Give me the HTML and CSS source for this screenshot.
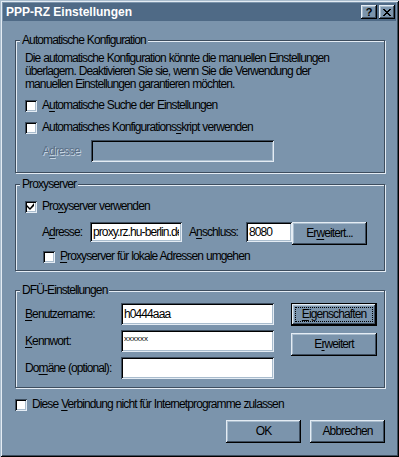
FILE: index.html
```html
<!DOCTYPE html>
<html lang="de">
<head>
  <meta charset="UTF-8">
  <title>PPP-RZ Einstellungen</title>
  <link rel="stylesheet" href="styles.css">
</head>
<body>
  <div class="window">
    <div class="titlebar">
      <span class="title">PPP-RZ Einstellungen</span>
      <div class="caption-buttons">
        <span class="cap-btn help">?</span>
        <span class="cap-btn close">
          <svg width="8" height="7" viewBox="0 0 8 7"><path d="M0 0h2v1h-2z M6 0h2v1h-2z M1 1h2v1h-2z M5 1h2v1h-2z M2 2h4v1h-4z M3 3h2v1h-2z M2 4h4v1h-4z M1 5h2v1h-2z M5 5h2v1h-2z M0 6h2v1h-2z M6 6h2v1h-2z" fill="#000"/></svg>
        </span>
      </div>
    </div>

    <div class="dialog">
      <div class="group group-auto">
        <div class="legend">Automatische Konfiguration</div>
        <p class="note">Die automatische Konfiguration könnte die manuellen Einstellungen<br>überlagern. Deaktivieren Sie sie, wenn Sie die Verwendung der<br>manuellen Einstellungen garantieren möchten.</p>
        <label class="check auto-search"><span class="box"></span><span>A<u>u</u>tomatische Suche der Einstellungen</span></label>
        <label class="check auto-script"><span class="box"></span><span>Automatisches Konfigurations<u>s</u>kript verwenden</span></label>
        <div class="field-row script-row">
          <span class="disabled-label">A<u>d</u>resse</span>
          <input class="textbox disabled" type="text" disabled>
        </div>
      </div>

      <div class="group group-proxy">
        <div class="legend">Proxyserver</div>
        <label class="check use-proxy"><span class="box"><svg width="8" height="8" viewBox="0 0 8 8"><path d="M7 0v3l-4 4-3-3v-2l3 3z" fill="#000"/></svg></span><span>Pro<u>x</u>yserver verwenden</span></label>
        <div class="proxy-row">
          <span class="lbl lbl-addr">A<u>d</u>resse:</span>
          <input class="textbox addr" type="text" value="proxy.rz.hu-berlin.de">
          <span class="lbl lbl-port">A<u>n</u>schluss:</span>
          <input class="textbox port" type="text" value="8080">
          <button class="btn btn-adv">Er<u>w</u>eitert...</button>
        </div>
        <label class="check bypass"><span class="box"></span><span><u>P</u>roxyserver für lokale Adressen umgehen</span></label>
      </div>

      <div class="group group-dfu">
        <div class="legend">DFÜ-Einstellungen</div>
        <div class="dfu-body">
          <div class="dfu-fields">
            <span class="lbl"><u>B</u>enutzername:</span>
            <input class="textbox" type="text" value="h0444aaa">
            <span class="lbl"><u>K</u>ennwort:</span>
            <input class="textbox pass" type="text" value="xxxxxx">
            <span class="lbl">Do<u>m</u>äne (optional):</span>
            <input class="textbox" type="text">
          </div>
          <div class="dfu-buttons">
            <button class="btn default"><span class="focus"><u>E</u>igenschaften</span></button>
            <button class="btn">E<u>r</u>weitert</button>
          </div>
        </div>
      </div>

      <label class="check no-inet"><span class="box"></span><span>Diese <u>V</u>erbindung nicht für Internetprogramme zulassen</span></label>

      <div class="actions">
        <button class="btn">OK</button>
        <button class="btn">Abbrechen</button>
      </div>
    </div>
  </div>
</body>
</html>
```

FILE: styles.css
```css
body { margin: 0; font-family: "Liberation Sans", Arial, sans-serif; font-size: 12px; letter-spacing: -0.9px; word-spacing: 0.5px; line-height: 13px; color: #000; }
u { text-decoration-thickness: 1px; text-underline-offset: 2px; }

.window { width: 399px; height: 457px; box-sizing: border-box; padding: 3px; background: #7b94ac; display: flex; flex-direction: column;
  box-shadow: inset 1px 1px #a9bccd, inset -1px -1px #000, inset 2px 2px #e4ecf4, inset -2px -2px #3d4d5e; }

.titlebar { height: 18px; flex: none; background: #4f6a86; display: flex; align-items: center; justify-content: space-between; padding: 0 1px 0 3px; }
.title { font-weight: bold; font-size: 12px; letter-spacing: 0; word-spacing: 0; color: #fff; }
.caption-buttons { display: flex; gap: 2px; }
.cap-btn { width: 16px; height: 14px; box-sizing: border-box; background: #7b94ac; display: flex; align-items: center; justify-content: center;
  box-shadow: inset -1px -1px #000, inset 1px 1px #e4ecf4, inset -2px -2px #3d4d5e, inset 2px 2px #a9bccd; }
.help { font-weight: bold; font-size: 11px; letter-spacing: 0; line-height: 14px; padding-bottom: 1px; }

.dialog { flex: 1; display: flex; flex-direction: column; padding: 19px 11px 0 12px; white-space: nowrap; }

.group { border: 1px solid #3d4d5e; box-shadow: inset 1px 1px #e4ecf4, 1px 1px #e4ecf4; display: flex; flex-direction: column; padding: 0 8px 0 9px; }
.legend { align-self: flex-start; height: 13px; margin: -7px 0 0 -5px; padding: 0 2px; background: #7b94ac; }

.note { margin: 5px 0 0; }

.check { display: flex; align-items: center; gap: 5px; height: 13px; }
.box { width: 12px; height: 12px; flex: none; box-sizing: border-box; background: #fff; display: flex; align-items: center; justify-content: center;
  box-shadow: inset 1px 1px #3d4d5e, inset -1px -1px #e4ecf4, inset 2px 2px #000, inset -2px -2px #a9bccd; }

.group-auto { padding-bottom: 10px; }
.auto-search { margin-top: 8px; }
.auto-script { margin-top: 9px; }

.textbox { box-sizing: border-box; border: 0; margin: 0; background: #fff; font: inherit; letter-spacing: inherit; word-spacing: inherit; color: #000; padding: 0 3px; outline: none;
  box-shadow: inset 1px 1px #3d4d5e, inset -1px -1px #e4ecf4, inset 2px 2px #000, inset -2px -2px #a9bccd; }
.textbox.disabled { background: #7b94ac; }

.field-row { display: flex; align-items: center; margin-top: 6px; padding-left: 17px; }
.disabled-label { width: 49px; color: #5a6f86; text-shadow: 1px 1px #c8d5e2; }
.script-row .textbox { width: 183px; height: 22px; }

.group-proxy { margin-top: 11px; padding-bottom: 7px; }
.use-proxy { margin-top: 9px; }
.proxy-row { display: flex; align-items: flex-start; margin-top: 9px; padding-left: 17px; }
.proxy-row .lbl { line-height: 20px; }
.lbl-addr { width: 48px; }
.addr { width: 92px; height: 20px; }
.lbl-port { width: 57px; margin-left: 7px; }
.port { width: 46px; height: 20px; }
.btn-adv { width: 80px; margin-left: 8px; }
.bypass { margin-top: 5px; padding-left: 18px; }

.group-dfu { margin-top: 19px; padding-bottom: 8px; }
.dfu-body { display: flex; margin-top: 6px; }
.dfu-fields { display: grid; grid-template-columns: 96px 153px; grid-auto-rows: 22px; row-gap: 5px; align-items: center; }
.dfu-fields .textbox { height: 22px; width: 153px; }
.pass { font-size: 8px; letter-spacing: 0; padding-bottom: 6px; }
.dfu-buttons { display: flex; flex-direction: column; gap: 7px; margin-left: 17px; }
.dfu-buttons .btn { width: 86px; }

.btn { height: 23px; width: 75px; box-sizing: border-box; border: 0; margin: 0; padding: 0; background: #7b94ac; font: inherit; letter-spacing: inherit; color: #000;
  display: flex; align-items: center; justify-content: center;
  box-shadow: inset -1px -1px #000, inset 1px 1px #e4ecf4, inset -2px -2px #3d4d5e, inset 2px 2px #a9bccd; }
.btn.default { padding: 4px; box-shadow: inset 0 0 0 1px #000, inset -2px -2px #000, inset 2px 2px #e4ecf4, inset -3px -3px #3d4d5e, inset 3px 3px #a9bccd; }
.focus { flex: 1; align-self: stretch; display: flex; align-items: center; justify-content: center; border: 1px dotted #000; }

.no-inet { margin-top: 10px; }

.actions { display: flex; justify-content: flex-end; gap: 9px; margin-top: 9px; }
```
